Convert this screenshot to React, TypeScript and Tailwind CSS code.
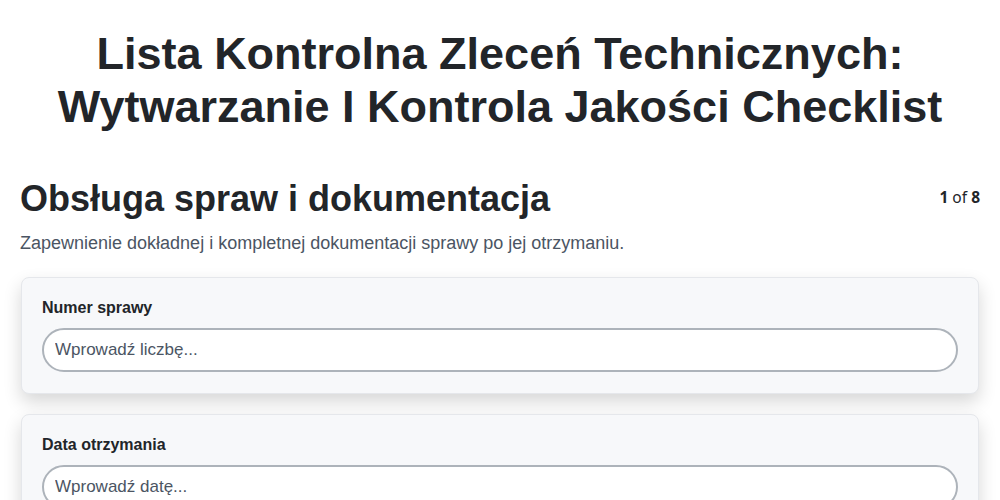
export default function App() {
  const fields = [
    { label: "Numer sprawy", placeholder: "Wprowadź liczbę..." },
    { label: "Data otrzymania", placeholder: "Wprowadź datę..." },
  ];
  return (
    <div className="min-h-screen bg-white text-[#222] font-['Liberation_Sans',Arial,sans-serif]">
      <h1 className="pt-[27px] text-center text-[45px] font-bold leading-[53px] text-[#222529]">
        Lista Kontrolna Zleceń Technicznych:
        <br />
        Wytwarzanie I Kontrola Jakości Checklist
      </h1>
      <div className="px-[20px] pt-[44px]">
        <div className="flex items-start justify-between">
          <h2 className="text-[36px] font-bold leading-[44px] text-[#222529]">
            Obsługa spraw i dokumentacja
          </h2>
          <div className="pt-[9px] text-[15.5px] text-[#222529] font-['Noto_Sans',sans-serif]">
            <span className="font-bold">1</span> of <span className="font-bold">8</span>
          </div>
        </div>
        <p className="mt-[9px] text-[18px] leading-[26px] text-[#4b5563]">
          Zapewnienie dokładnej i kompletnej dokumentacji sprawy po jej otrzymaniu.
        </p>
        <div className="mt-[21px] flex flex-col gap-[20px]">
          {fields.map((f) => (
            <div
              key={f.label}
              className="mx-[1px] rounded-[8px] border border-[#e5e7eb] bg-[#f7f8fa] px-[20px] pt-[20px] pb-[21px] shadow-[0_8px_18px_rgba(0,0,0,0.16)]"
            >
              <label className="block text-[16px] font-bold leading-[20px] text-[#222529]">
                {f.label}
              </label>
              <input
                placeholder={f.placeholder}
                className="mt-[10px] block h-[44px] w-full rounded-full border-2 border-[#adb3ba] bg-white px-[11px] text-[17px] text-[#222] placeholder:text-[#4b5563] outline-none"
              />
            </div>
          ))}
        </div>
      </div>
    </div>
  );
}
